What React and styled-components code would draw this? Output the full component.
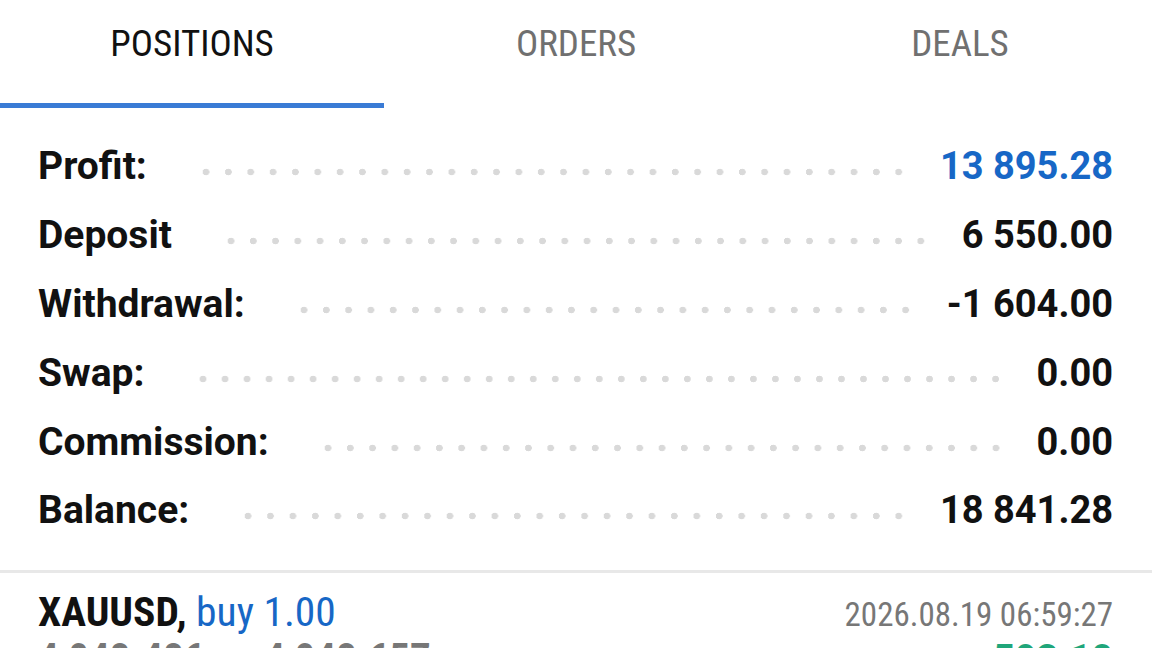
import React from "react";
import styled, { createGlobalStyle } from "styled-components";

const GlobalStyle = createGlobalStyle`
  html, body {
    margin: 0;
    padding: 0;
    background: #ffffff;
    overflow: hidden;
  }
  body {
    font-family: Roboto, "Noto Sans", sans-serif;
    -webkit-font-smoothing: antialiased;
  }
`;

const tabs = ["POSITIONS", "ORDERS", "DEALS"];

const summary = [
  { label: "Profit:", value: "13 895.28", accent: true },
  { label: "Deposit", value: "6 550.00" },
  { label: "Withdrawal:", value: "-1 604.00" },
  { label: "Swap:", value: "0.00" },
  { label: "Commission:", value: "0.00" },
  { label: "Balance:", value: "18 841.28" },
];

const App = () => {
  const active = 0;

  return (
    <Screen>
      <GlobalStyle />
      <TabBar>
        {tabs.map((t, idx) => (
          <Tab key={t} $active={idx === active}>
            <Condensed>{t}</Condensed>
          </Tab>
        ))}
      </TabBar>

      <Summary>
        {summary.map((s) => (
          <Row key={s.label}>
            <Label>{s.label}</Label>
            <Dots />
            <Value $accent={s.accent}>{s.value}</Value>
          </Row>
        ))}
      </Summary>

      <Divider />

      <Position>
        <PosLine>
          <Title>
            <Condensed>
              <b>XAUUSD,</b> <Side>buy 1.00</Side>
            </Condensed>
          </Title>
          <Time>
            <Condensed>2026.08.19 06:59:27</Condensed>
          </Time>
        </PosLine>
        <PosLine>
          <Prices>
            <Condensed>4 048.486 → 4 048.657</Condensed>
          </Prices>
          <PosProfit>593.10</PosProfit>
        </PosLine>
      </Position>
    </Screen>
  );
};

const Screen = styled.div`
  width: 1152px;
  height: 648px;
  overflow: hidden;
  background: #fff;
`;

const TabBar = styled.div`
  display: grid;
  grid-template-columns: repeat(3, 1fr);
  height: 108px;
`;

const Tab = styled.div`
  display: flex;
  align-items: center;
  justify-content: center;
  padding-bottom: 16px;
  box-sizing: border-box;
  font-size: 37px;
  color: ${(p) => (p.$active ? "#111111" : "#707070")};
  border-bottom: 5px solid ${(p) => (p.$active ? "#3a7bd5" : "transparent")};
`;

const Condensed = styled.span`
  font-stretch: 75%;
`;

const Summary = styled.div`
  display: flex;
  flex-direction: column;
  padding: 24px 39px 25px 38px;
`;

const Row = styled.div`
  display: flex;
  align-items: center;
  height: 68.8px;
`;

const Label = styled.div`
  font-size: 39px;
  font-weight: 700;
  color: #111;
`;

const Dots = styled.div`
  flex: 1;
  height: 8px;
  margin: 12px 30px 0 48px;
  background-image: radial-gradient(circle, #d9d9d9 3.1px, transparent 3.6px);
  background-size: 22px 8px;
  background-repeat: space no-repeat;
`;

const Value = styled.div`
  font-size: 38px;
  font-weight: 700;
  color: ${(p) => (p.$accent ? "#1767c6" : "#111")};
`;

const Divider = styled.div`
  height: 3px;
  background: #e8e8e8;
`;

const Position = styled.div`
  padding: 17px 39px 0 38px;
`;

const PosLine = styled.div`
  display: flex;
  justify-content: space-between;
  align-items: baseline;
`;

const Title = styled.div`
  font-size: 41.5px;
  color: #111;
  line-height: 44px;

  & b {
    font-weight: 700;
  }
`;

const Side = styled.span`
  color: #1767c6;
  font-weight: 400;
`;

const Time = styled.div`
  font-size: 33px;
  color: #777;
`;

const Prices = styled.div`
  font-size: 41px;
  font-weight: 700;
  color: #777;
`;

const PosProfit = styled.div`
  font-size: 38px;
  font-weight: 700;
  color: #1fa67a;
`;

export default App;
